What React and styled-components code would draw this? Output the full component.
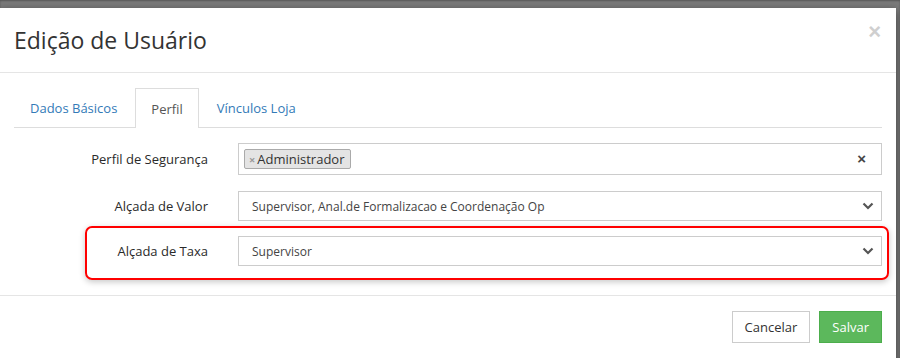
import React from "react"
import styled, { createGlobalStyle } from "styled-components"

const Global = createGlobalStyle`
    html, body {
        margin: 0;
        padding: 0;
        background: #7b7b7b;
        font-family: "Open Sans", "Liberation Sans", sans-serif;
        color: #333;
    }
`;

const tabs = ["Dados Básicos", "Perfil", "Vínculos Loja"];

const Chevron = () => (
    <svg width="12" height="8" viewBox="0 0 12 8">
        <polyline points="1.5,1.5 6,6 10.5,1.5" fill="none" stroke="#555" strokeWidth="2.2" />
    </svg>
);

const App = () => {
    return (
        <>
        <Global />
        <Backdrop>
            <Modal>
                <Header>
                    <Title>Edição de Usuário</Title>
                    <Close>×</Close>
                </Header>

                <Body>
                    <Tabs>
                        {tabs.map(t =>
                            <Tab key={t} active={t === "Perfil"}>{t}</Tab>
                        )}
                    </Tabs>

                    <Form>
                        <Row>
                            <Label>Perfil de Segurança</Label>
                            <MultiSelect>
                                <Tag><span>×</span>Administrador</Tag>
                                <Clear>×</Clear>
                            </MultiSelect>
                        </Row>

                        <Row>
                            <Label>Alçada de Valor</Label>
                            <Select>
                                <span>Supervisor, Anal.de Formalizacao e Coordenação Op</span>
                                <Chevron />
                            </Select>
                        </Row>

                        <Highlight>
                            <Row>
                                <Label>Alçada de Taxa</Label>
                                <Select>
                                    <span>Supervisor</span>
                                    <Chevron />
                                </Select>
                            </Row>
                        </Highlight>
                    </Form>
                </Body>

                <Footer>
                    <Button>Cancelar</Button>
                    <Button primary>Salvar</Button>
                </Footer>
            </Modal>
        </Backdrop>
        </>
    )
}

const Backdrop = styled.div`
    width: 900px;
    height: 358px;
    overflow: hidden;
    padding-top: 8px;
    box-sizing: border-box;
    box-shadow: inset 0 1px 2px rgba(0,0,0,0.3);
`;

const Modal = styled.div`
    width: 896px;
    height: 400px;
    background: #fff;
    box-shadow: 0 3px 9px rgba(0,0,0,0.5);
`;

const Header = styled.div`
    height: 64px;
    padding: 0 15px 0 14px;
    border-bottom: 1px solid #e5e5e5;
    display: flex;
    align-items: center;
    justify-content: space-between;
`;

const Title = styled.h4`
    margin: 0;
    font-size: 23px;
    font-weight: 400;
    color: #333;
`;

const Close = styled.button`
    border: none;
    background: none;
    padding: 0;
    margin-top: -16px;
    font-family: "Liberation Sans", sans-serif;
    font-size: 22px;
    line-height: 1;
    font-weight: 700;
    color: #cfcfcf;
`;

const Body = styled.div`
    padding: 15px 14px 15px;
`;

const Tabs = styled.div`
    display: flex;
    gap: 2px;
    height: 39px;
    border-bottom: 1px solid #ddd;
`;

const Tab = styled.div`
    box-sizing: border-box;
    padding: 0 15px;
    display: flex;
    align-items: center;
    font-size: 13px;
    color: ${p => p.active ? "#555" : "#337ab7"};
    background: #fff;
    border: 1px solid ${p => p.active ? "#ddd" : "transparent"};
    border-bottom: none;
    height: ${p => p.active ? "40px" : "39px"};
`;

const Form = styled.div`
    padding-top: 15px;
    display: flex;
    flex-direction: column;
    gap: 16px;
`;

const Row = styled.div`
    display: grid;
    grid-template-columns: 1fr 644px;
    column-gap: 30px;
    align-items: center;
`;

const Label = styled.label`
    text-align: right;
    font-size: 13px;
    font-weight: 500;
    color: #2a2a2a;
`;

const MultiSelect = styled.div`
    height: 32px;
    box-sizing: border-box;
    border: 1px solid #ccc;
    padding: 0 15px 0 5px;
    display: flex;
    align-items: center;
    justify-content: space-between;
`;

const Tag = styled.div`
    height: 20px;
    box-sizing: border-box;
    background: #e4e4e4;
    border: 1px solid #aaa;
    border-radius: 2px;
    padding: 0 5px 0 4px;
    display: flex;
    align-items: center;
    font-size: 13px;
    color: #333;
    span{
        color: #999;
        font-size: 11px;
        font-weight: 700;
        margin-right: 2px;
    }
`;

const Clear = styled.span`
    font-family: "Liberation Sans", sans-serif;
    font-size: 15px;
    font-weight: 700;
    color: #444;
    margin-top: -2px;
`;

const Select = styled.div`
    height: 30px;
    box-sizing: border-box;
    border: 1px solid #ccc;
    padding: 0 7px 0 13px;
    display: flex;
    align-items: center;
    justify-content: space-between;
    font-size: 12px;
    color: #444;
`;

const Highlight = styled.div`
    margin: -11px -7px 0 71px;
    padding: 8px 5px 12px 0;
    border: 2px solid #f00;
    border-radius: 7px;
    box-shadow: 0 2px 6px rgba(0,0,0,0.22);
`;

const Footer = styled.div`
    border-top: 1px solid #e5e5e5;
    padding: 15px 14px;
    display: flex;
    justify-content: flex-end;
    gap: 9px;
`;

const Button = styled.button`
    height: 32px;
    padding: 0 12px;
    font-family: "Open Sans", "Liberation Sans", sans-serif;
    font-size: 13px;
    border-radius: 0;
    border: 1px solid ${p => p.primary ? "#4cae4c" : "#ccc"};
    background: ${p => p.primary ? "#5cb85c" : "#fff"};
    color: ${p => p.primary ? "#fff" : "#333"};
`;

export default App;
